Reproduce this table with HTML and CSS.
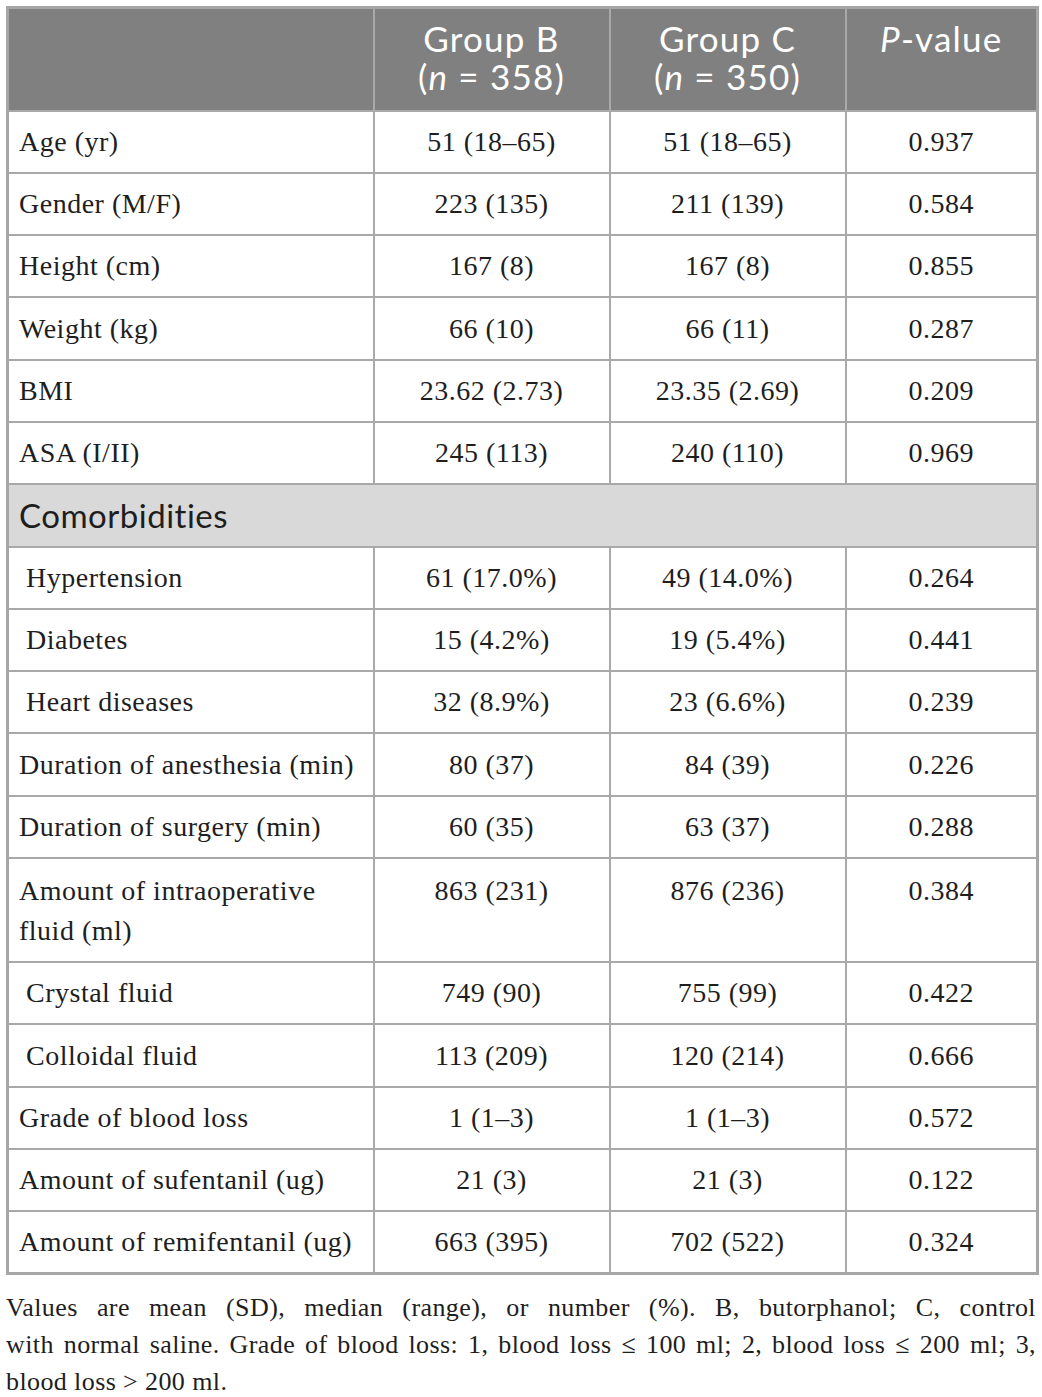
FILE: index.html
```html
<!DOCTYPE html>
<html>
<head>
<meta charset="utf-8">
<link rel="stylesheet" href="styles.css">
</head>
<body>
<div class="wrap">
<table class="data">
  <colgroup>
    <col class="c1"><col class="c2"><col class="c3"><col class="c4">
  </colgroup>
  <thead>
    <tr>
      <th></th>
      <th>Group B<br>(<i>n</i> = 358)</th>
      <th>Group C<br>(<i>n</i> = 350)</th>
      <th><i>P</i>-value</th>
    </tr>
  </thead>
  <tbody>
    <tr><td>Age (yr)</td><td>51 (18–65)</td><td>51 (18–65)</td><td>0.937</td></tr>
    <tr><td>Gender (M/F)</td><td>223 (135)</td><td>211 (139)</td><td>0.584</td></tr>
    <tr><td>Height (cm)</td><td>167 (8)</td><td>167 (8)</td><td>0.855</td></tr>
    <tr><td>Weight (kg)</td><td>66 (10)</td><td>66 (11)</td><td>0.287</td></tr>
    <tr><td>BMI</td><td>23.62 (2.73)</td><td>23.35 (2.69)</td><td>0.209</td></tr>
    <tr><td>ASA (I/II)</td><td>245 (113)</td><td>240 (110)</td><td>0.969</td></tr>
    <tr class="section"><td colspan="4">Comorbidities</td></tr>
    <tr><td class="ind">Hypertension</td><td>61 (17.0%)</td><td>49 (14.0%)</td><td>0.264</td></tr>
    <tr><td class="ind">Diabetes</td><td>15 (4.2%)</td><td>19 (5.4%)</td><td>0.441</td></tr>
    <tr><td class="ind">Heart diseases</td><td>32 (8.9%)</td><td>23 (6.6%)</td><td>0.239</td></tr>
    <tr><td>Duration of anesthesia (min)</td><td>80 (37)</td><td>84 (39)</td><td>0.226</td></tr>
    <tr><td>Duration of surgery (min)</td><td>60 (35)</td><td>63 (37)</td><td>0.288</td></tr>
    <tr class="tall"><td>Amount of intraoperative fluid (ml)</td><td>863 (231)</td><td>876 (236)</td><td>0.384</td></tr>
    <tr><td class="ind">Crystal fluid</td><td>749 (90)</td><td>755 (99)</td><td>0.422</td></tr>
    <tr><td class="ind">Colloidal fluid</td><td>113 (209)</td><td>120 (214)</td><td>0.666</td></tr>
    <tr><td>Grade of blood loss</td><td>1 (1–3)</td><td>1 (1–3)</td><td>0.572</td></tr>
    <tr><td>Amount of sufentanil (ug)</td><td>21 (3)</td><td>21 (3)</td><td>0.122</td></tr>
    <tr><td>Amount of remifentanil (ug)</td><td>663 (395)</td><td>702 (522)</td><td>0.324</td></tr>
  </tbody>
</table>
<p class="note"><span class="ln">Values are mean (SD), median (range), or number (%). B, butorphanol; C, control</span> <span class="ln">with normal saline. Grade of blood loss: 1, blood loss ≤ 100 ml; 2, blood loss ≤ 200 ml; 3,</span> blood loss &gt; 200 ml.</p>
</div>
</body>
</html>
```

FILE: styles.css
```css
html, body {
  margin: 0;
  padding: 0;
  background: #ffffff;
}

.wrap {
  padding: 6px 6px 0 6px;
  width: 1030px;
}

.data {
  border-collapse: collapse;
  width: 1030px;
  table-layout: fixed;
  font-family: "Liberation Serif", "Times New Roman", serif;
  font-size: 28px;
  letter-spacing: 0.5px;
  color: #1e1e1e;
  border: 3px solid #a6a6a6;
}

.c1 { width: 366px; }
.c2 { width: 236px; }
.c3 { width: 236px; }
.c4 { width: 192px; }

.data th,
.data td {
  border: 2px solid #a9a9a9;
}

.data thead th {
  background: #808080;
  color: #ffffff;
  font-family: Lato, "Open Sans", sans-serif;
  font-weight: 400;
  font-size: 35px;
  letter-spacing: 1.2px;
  line-height: 38px;
  height: 103px;
  padding: 10px 6px 0 6px;
  vertical-align: top;
  text-align: center;
  box-sizing: border-box;
}

.data thead th i {
  font-style: italic;
}

.data tbody td {
  height: 62.3px;
  padding: 0 10px;
  text-align: center;
  vertical-align: middle;
  line-height: 40px;
  box-sizing: border-box;
}

.data tbody td:first-child {
  text-align: left;
}

.data tbody td.ind {
  padding-left: 17px;
}

.data tbody tr.tall td {
  height: 104px;
  vertical-align: top;
  padding-top: 12px;
}

.data tbody tr.section td {
  background: #d9d9d9;
  font-family: Lato, "Open Sans", sans-serif;
  font-size: 33px;
  letter-spacing: 0.5px;
  color: #1e1e1e;
  text-align: left;
}

.note {
  margin: 14px 0 0 0;
  font-family: "Liberation Serif", "Times New Roman", serif;
  font-size: 26px;
  letter-spacing: 0.4px;
  line-height: 37px;
  color: #1e1e1e;
  text-align: justify;
}

.note .ln {
  display: block;
  text-align: justify;
  text-align-last: justify;
}
```
